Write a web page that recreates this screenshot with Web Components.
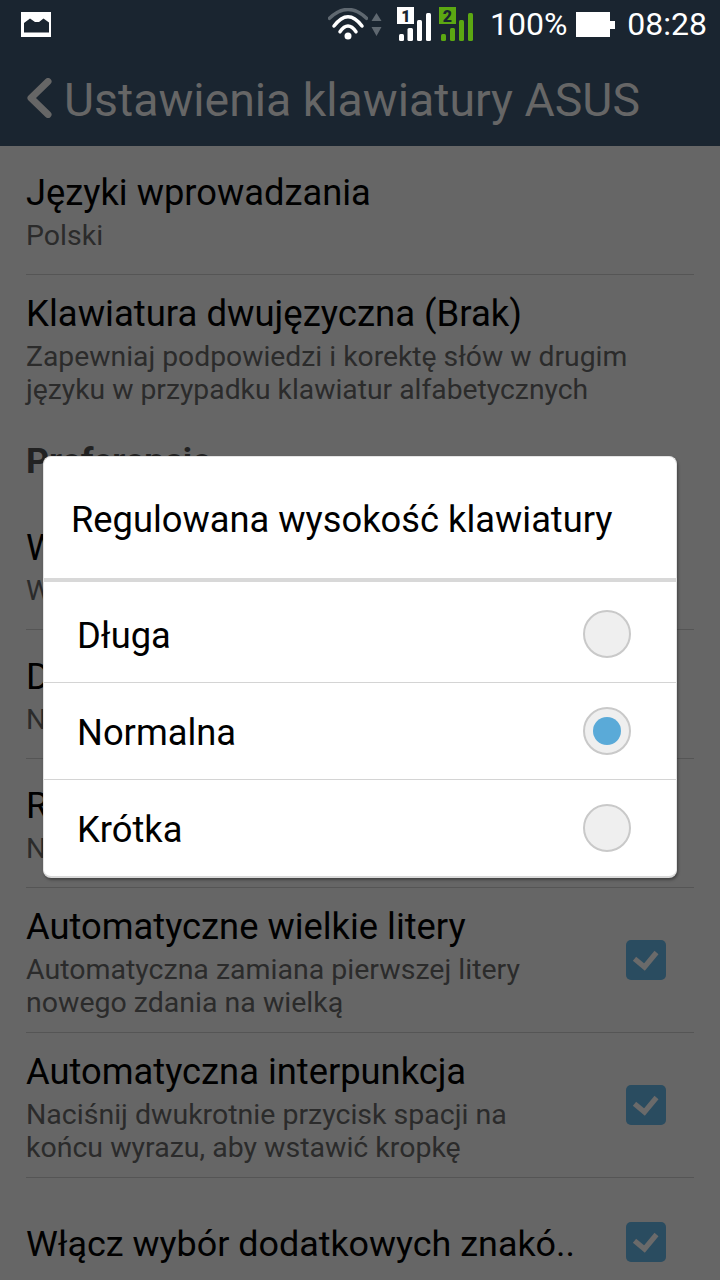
<!DOCTYPE html>
<html><head><meta charset="utf-8">
<style>
html,body{margin:0;padding:0;background:#666}
body{font-family:Roboto,"Noto Sans",sans-serif}
</style></head>
<body>
<template id="t-screen"><style>
:host{display:block;position:relative;width:720px;height:1280px;overflow:hidden;background:#666}
</style><slot></slot></template>

<template id="t-status"><style>
:host{display:flex;align-items:center;height:48px;background:#1a2530;color:#fff;padding:0 13px 0 21px;box-sizing:border-box}
.r{margin-left:auto;display:flex;align-items:center}
.t{font:32px/48px Roboto,sans-serif}
svg{display:block}
</style>
<svg width="30" height="25" viewBox="0 0 30 25"><rect width="30" height="25" fill="#fff"/><path d="M3 20.500V11L9 6.500l5 3.500h4l4.500-3.500L28 10.500v10z" fill="#1a2530"/></svg>
<div class="r">
<svg width="40" height="32" viewBox="0 0 40 32" fill="none" stroke-linecap="round"><path d="M1.500 10.300Q20-7.300 38.500 10.300" stroke="#5f6870" stroke-width="3.500"/><path d="M6 18Q20-.6 34 18" stroke="#fff" stroke-width="3.500"/><path d="M12 23.700Q20 12.300 28 23.700" stroke="#fff" stroke-width="3.500"/><circle cx="20" cy="28" r="3.500" fill="#fff"/></svg>
<svg style="margin-left:3px" width="11" height="24" viewBox="0 0 11 24"><path d="M5.500 1l5 8H.5zM.5 15h10l-5 9z" fill="#5f6870"/></svg>
<svg style="margin-left:15px" width="35" height="34" viewBox="0 0 35 34"><rect width="17" height="17" fill="#fff"/><text x="9" y="14.500" text-anchor="middle" font-family="Roboto,sans-serif" font-weight="900" font-size="16" fill="#1a2530">1</text><rect x="2" y="27" width="5" height="7" rx="1.500" fill="#fff"/><rect x="10.500" y="21" width="5.500" height="13" rx="1.500" fill="#fff"/><rect x="20" y="13" width="5" height="21" rx="1.500" fill="#fff"/><rect x="29" y="6" width="5" height="28" rx="1.500" fill="#fff"/></svg>
<svg style="margin-left:7px" width="35" height="34" viewBox="0 0 35 34"><rect width="17" height="17" fill="#5ca812"/><text x="8.500" y="14.500" text-anchor="middle" font-family="Roboto,sans-serif" font-weight="900" font-size="16" fill="#1a2530">2</text><rect x="2" y="27" width="5" height="7" rx="1.500" fill="#5ca812"/><rect x="11" y="21" width="5" height="13" rx="1.500" fill="#5ca812"/><rect x="20" y="13" width="5" height="21" rx="1.500" fill="#5ca812"/><rect x="29" y="6" width="5" height="28" rx="1.500" fill="#5ca812"/></svg>
<span class="t" style="margin-left:16px">100%</span>
<svg style="margin-left:9px" width="39" height="25" viewBox="0 0 39 25"><path d="M0 0h34v9h5v8h-5v8H0z" fill="#fff"/></svg>
<span class="t" style="margin-left:12px">08:28</span>
</div></template>

<template id="t-action"><style>
:host{display:flex;align-items:center;height:98px;background:#1a2530;color:#666;padding:8px 0 0 27px;box-sizing:border-box}
svg{display:block;margin:0 12px 7px 0}
.t{font:46.4px/1.2 Roboto,sans-serif;white-space:nowrap}
</style>
<svg width="25" height="40" viewBox="0 0 25 40" fill="none"><path d="M21 3.500L4 20l17 16.500" stroke="#666" stroke-width="7" stroke-linecap="round" stroke-linejoin="round"/></svg>
<span class="t"><slot></slot></span></template>

<template id="t-row"><style>
:host{display:flex;align-items:center;margin:0 26px;box-sizing:border-box;border-bottom:1px solid #555;color:#000}
:host([last]){border-bottom:0}
.m{flex:1;min-width:0;padding-top:var(--mt,2px)}
:host([solo]) .m{padding-top:4px}
.h{font-size:var(--hf,36.3px);line-height:44px;white-space:nowrap}
.s{font-size:var(--sf,28.5px);line-height:33px;color:#2b2b2b;white-space:nowrap;margin-top:4px}
:host([solo]) .s{display:none}
.c{display:none;width:40px;height:40px;border-radius:5px;background:#2a4c60;flex:none;margin-right:28px}
:host([checked]) .c{display:block}
svg{display:block}
</style>
<div class="m"><div class="h"><slot name="h"></slot></div><div class="s"><slot></slot></div></div>
<div class="c"><svg width="40" height="40" viewBox="0 0 40 40" fill="none"><path d="M8.500 18.700L18.500 27 30.500 12.500" stroke="#6a6a6a" stroke-width="5.200"/></svg></div></template>

<template id="t-section"><style>
:host{display:block;box-sizing:border-box;height:81px;padding-top:19px;margin:0 26px;font-size:35.6px;font-weight:700;line-height:44px;color:#222;white-space:nowrap}
</style><slot></slot></template>

<template id="t-dialog"><style>
:host{position:absolute;left:43px;top:456px;width:634px;box-sizing:border-box;background:#fff;border:1px solid #e4e4e4;border-bottom:2px solid #d9d9d9;border-radius:8px;box-shadow:1px 2px 3px rgba(0,0,0,.35);overflow:hidden;display:block}
.t{box-sizing:border-box;height:125px;padding-left:27px;font-size:36.3px;line-height:126px;color:#000;border-bottom:4px solid #d8d8d8;white-space:nowrap}
</style><div class="t"><slot name="title"></slot></div><slot></slot></template>

<template id="t-radio"><style>
:host{display:flex;align-items:center;height:97px;box-sizing:border-box;padding:0 45px 0 33px;border-bottom:1px solid #d4d4d4;font-size:36.3px;color:#000}
:host([first]){height:101px;padding-top:4px}
:host([last]){border-bottom:0;height:96px}
.l{flex:1;margin-top:2px}
.o{width:48px;height:48px;box-sizing:border-box;border-radius:50%;border:2px solid #c9c9c9;background:#efefef;display:flex;align-items:center;justify-content:center}
.d{width:28px;height:28px;border-radius:50%;background:#5aaad8;display:none}
:host([checked]) .d{display:block}
</style><span class="l"><slot></slot></span><span class="o"><span class="d"></span></span></template>

<x-screen>
<x-status></x-status>
<x-action>Ustawienia klawiatury ASUS</x-action>
<x-row style="height:129px"><span slot="h">Języki wprowadzania</span>Polski</x-row>
<x-row style="height:145px;border-bottom:0;--sf:28.3px;--hf:36.5px"><span slot="h">Klawiatura dwujęzyczna (Brak)</span>Zapewniaj podpowiedzi i korektę słów w drugim<br>języku w przypadku klawiatur alfabetycznych</x-row>
<x-section>Preferencje</x-section>
<x-row style="height:129px"><span slot="h">W</span>W</x-row>
<x-row style="height:129px"><span slot="h">D</span>N</x-row>
<x-row style="height:129px"><span slot="h">R</span>N</x-row>
<x-row checked style="height:145px;--mt:4px"><span slot="h">Automatyczne wielkie litery</span>Automatyczna zamiana pierwszej litery<br>nowego zdania na wielką</x-row>
<x-row checked style="height:145px;--mt:4px"><span slot="h">Automatyczna interpunkcja</span>Naciśnij dwukrotnie przycisk spacji na<br>końcu wyrazu, aby wstawić kropkę</x-row>
<x-row checked last solo style="height:128px;--hf:35.9px"><span slot="h">Włącz wybór dodatkowych znakó..</span></x-row>
<x-dialog>
<span slot="title">Regulowana wysokość klawiatury</span>
<x-radio first>Długa</x-radio>
<x-radio checked>Normalna</x-radio>
<x-radio last>Krótka</x-radio>
</x-dialog>
</x-screen>
<script>
for (const [tag,id] of [['x-screen','t-screen'],['x-status','t-status'],['x-action','t-action'],['x-row','t-row'],['x-section','t-section'],['x-dialog','t-dialog'],['x-radio','t-radio']]) {
  customElements.define(tag, class extends HTMLElement {
    constructor(){super();this.attachShadow({mode:'open'}).appendChild(document.getElementById(id).content.cloneNode(true));}
  });
}
</script>
</body></html>
